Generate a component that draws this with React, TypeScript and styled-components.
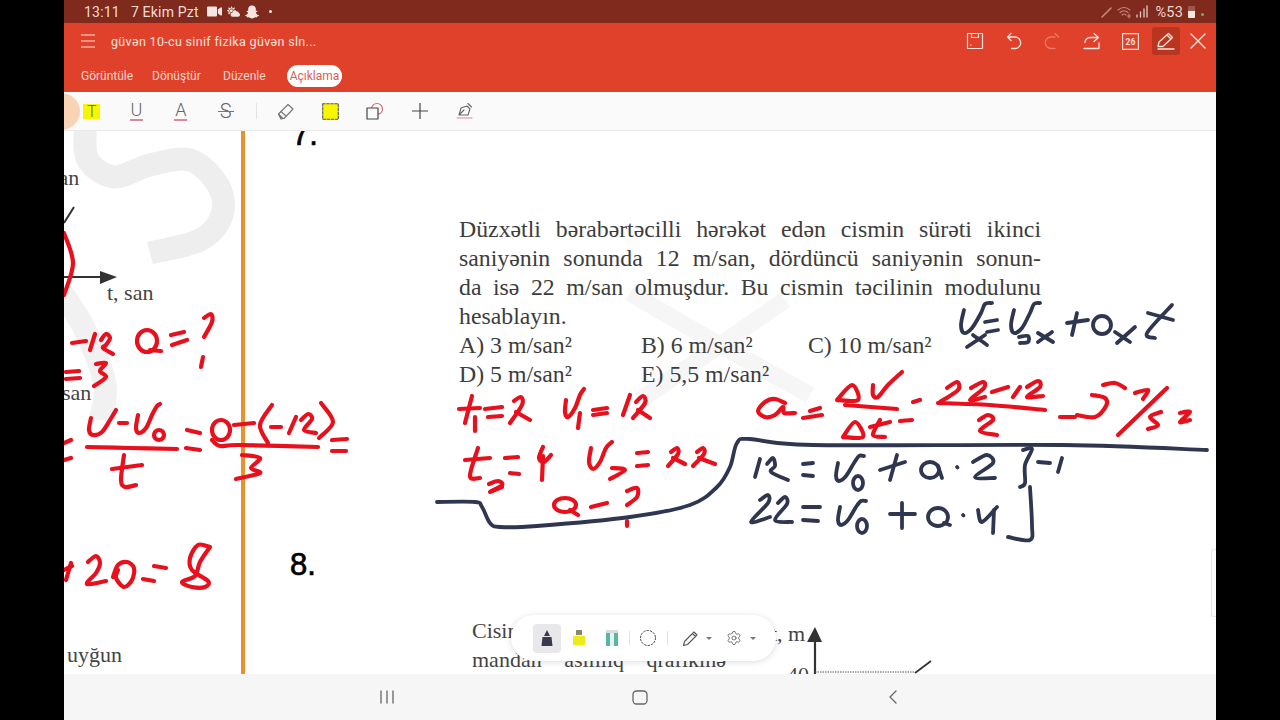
import React from "react";
import styled, { createGlobalStyle } from "styled-components";
import { FaVideo, FaCloudSun, FaSnapchatGhost } from "react-icons/fa";
import { Settings } from "lucide-react";

const Global = createGlobalStyle`
  html, body { margin: 0; padding: 0; background: #000; }
  body { font-family: Roboto, "Noto Sans", sans-serif; }
`;

const Screen = styled.div`
  width: 1280px; height: 720px; padding: 0 64px; box-sizing: border-box;
  background: #000; overflow: hidden;
`;
const Tablet = styled.div`
  width: 1152px; height: 720px; display: flex; flex-direction: column; background: #fff;
`;
const StatusBar = styled.div`
  height: 23px; flex: none; background: #7f2a1c; color: #f3dcd6; display: flex; align-items: center;
  padding: 0 12px 0 20px; font-size: 14px; letter-spacing: .2px;
`;
const StatusTime = styled.span`margin-right: 11px;`;
const StatusDate = styled.span`margin-right: 8px;`;
const StatusIcons = styled.div`display: flex; align-items: center; gap: 5px; color: #f6e6e2;`;
const StatusDot = styled.span`width: 3px; height: 3px; border-radius: 50%; background: #f6e6e2; margin-left: 5px;`;
const StatusRight = styled.div`margin-left: auto; display: flex; align-items: center; gap: 3px; color: #c98a7d;`;
const Percent = styled.span`font-size: 14.5px; line-height: 23px; padding-top: 1px; margin-left: 3px; color: #f0d5cf;`;
const Battery = styled.span`
  width: 7px; height: 12px; margin-left: 2px; border-radius: 1px;
  background: linear-gradient(#9c5a4e 0 45%, #f6e6e2 45%);
`;
const GreenDot = styled.span`width: 3px; height: 3px; border-radius: 50%; background: #57c34e; margin: 6px 0 0 3px;`;

const AppBar = styled.header`
  flex: none; height: 69px; background: #e0412a; color: #fbe3dd; display: flex; flex-direction: column;
`;
const TitleRow = styled.div`height: 36px; display: flex; align-items: center; padding-left: 17px;`;
const Title = styled.span`margin-left: 16px; font-size: 12.5px; letter-spacing: .33px; color: #fbe3dd;`;
const Actions = styled.div`margin-left: auto; display: flex; align-items: center;`;
const Action = styled.button<{ $w: number; $on?: boolean }>`
  width: ${p => p.$w}px; height: 28px; padding: 0; border: 0; border-radius: 3px; display: flex;
  align-items: center; justify-content: center; color: inherit;
  background: ${p => (p.$on ? "#b8361f" : "transparent")};
`;
const TabRow = styled.nav`height: 33px; display: flex; align-items: center; padding-left: 17px; font-size: 12px;`;
const Tab = styled.span<{ $w: number }>`width: ${p => p.$w}px; color: #f8d5cc;`;
const ActiveTab = styled.span`
  background: #fff; color: #d95f54; border-radius: 11px; height: 22px; line-height: 22px; width: 55px;
  text-align: center; font-size: 12px; margin-left: -7px;
`;

const ToolBar = styled.div`
  flex: none; height: 39px; background: #fafafa; border-bottom: 1px solid #e9e9e9; box-sizing: border-box;
  display: flex; align-items: center; padding-left: 5.5px; position: relative; overflow: hidden;
`;
const Blob = styled.span`
  position: absolute; left: -21px; top: 1px; width: 37px; height: 37px; border-radius: 50%; background: #f9d3b6;
`;
const Tool = styled.div`
  width: 44.6px; height: 30px; flex: none; display: flex; align-items: center; justify-content: center; position: relative;
`;
const ToolDivider = styled.span`width: 1px; height: 16px; background: #e3e3e3; margin: 0 7px 0 8px; flex: none;`;
const HighlightT = styled.span`
  width: 17px; height: 15px; background: #f7f500; color: #555; font: 300 16px/15px Roboto, sans-serif; text-align: center;
`;
const GlyphTool = styled.span`
  display: flex; flex-direction: column; align-items: center; color: #666; font: 300 18px/17px Roboto, sans-serif;
`;
const PinkLine = styled.span`display: block; width: 13px; height: 1.5px; background: #d88a9c; margin-top: 1px;`;
const Struck = styled.span`
  color: #666; font: 300 20px/20px Roboto, sans-serif; position: relative; padding: 0 1px;
  &::after { content: ""; position: absolute; left: -1px; right: -1px; top: 10px; height: 1px; background: #777; }
`;

const Canvas = styled.main`flex: 1; position: relative; overflow: hidden; background: #fff;`;
const Drawing = styled.svg`position: absolute; left: 0; top: 0; width: 1152px; height: 543px;`;
const PageText = styled.div<{ $x: number; $y: number; $spread?: number }>`
  position: absolute; left: ${p => p.$x - 64}px; top: ${p => p.$y - 131}px; white-space: nowrap; color: #444;
  font: 22px/24px "Liberation Serif", serif; word-spacing: ${p => p.$spread ?? 0}px;
`;
const Number_ = styled.div<{ $x: number; $y: number }>`
  position: absolute; left: ${p => p.$x - 64}px; top: ${p => p.$y - 131}px; color: #000;
  font: 31px/34px "Liberation Sans", sans-serif; -webkit-text-stroke: .7px #000;
`;
const Question = styled.section`
  position: absolute; left: 395px; top: 83.5px; width: 582px; color: #3d3d3d;
  font: 23.8px/29px "Liberation Serif", serif;
`;
const Justified = styled.div`text-align: justify; text-align-last: justify; white-space: nowrap;`;
const Options = styled.div`display: grid; grid-template-columns: 182px 167px 1fr; white-space: nowrap;`;
const Orange = styled.span`position: absolute; left: 177px; top: 0; bottom: 0; width: 4px; background: #e8922e;`;
const Scroll = styled.span`
  position: absolute; right: 0; top: 418px; width: 4px; height: 66px; border: 1px solid #e6e6e6; border-right: 0; border-radius: 3px 0 0 3px;
`;

const Pill = styled.div`
  position: absolute; left: 447px; top: 484px; width: 265px; height: 46px; border-radius: 23px; background: #fff;
  box-shadow: 0 1px 6px rgba(0,0,0,.14); display: flex; align-items: center; padding-left: 22px; box-sizing: border-box;
`;
const PillTool = styled.div<{ $on?: boolean; $w: number; $gap?: number }>`
  width: ${p => p.$w}px; height: 29px; flex: none; border-radius: 4px; display: flex; align-items: center; justify-content: center;
  gap: ${p => p.$gap ?? 0}px; color: #555; background: ${p => (p.$on ? "#e8e8ea" : "transparent")};
`;
const PillDivider = styled.span`width: 1px; height: 14px; background: #e4e4e4; flex: none; margin-left: 1px;`;
const Caret = styled.span`width: 0; height: 0; border: 3px solid transparent; border-top: 3px solid #777; border-bottom: 0;`;

const NavBar = styled.footer`
  flex: none; height: 46px; background: #f6f6f6; display: grid; grid-template-columns: repeat(3, 253px);
  justify-content: center; align-items: center; justify-items: center; color: #666;
`;

/* Freehand ink: smooth curve through points given in screen coordinates */
const s = (...p: number[]) => {
  let d = `M${p[0]},${p[1]}`;
  const n = p.length / 2;
  const at = (i: number) => { const k = Math.max(0, Math.min(n - 1, i)); return [p[k * 2], p[k * 2 + 1]]; };
  for (let i = 0; i < n - 1; i++) {
    const [a, b] = at(i - 1), [c, e] = at(i), [f, g] = at(i + 1), [h, j] = at(i + 2);
    d += `C${(c + (f - a) / 6).toFixed(1)},${(e + (g - b) / 6).toFixed(1)} ${(f - (h - c) / 6).toFixed(1)},${(g - (j - e) / 6).toFixed(1)} ${f},${g}`;
  }
  return d;
};
const o = (x: number, y: number, rx: number, ry: number) =>
  `M${x - rx},${y}a${rx},${ry} 0 1,0 ${rx * 2},0a${rx},${ry} 0 1,0 ${-rx * 2},0`;

const WATERMARK = [
  s(150, 253, 200, 240, 222, 215, 218, 185, 190, 160, 150, 165, 114, 177, 88, 160, 85, 130),
  s(60, 290, 85, 330, 105, 385, 100, 420),
  s(630, 293, 720, 345, 810, 395),
  s(785, 300, 720, 345, 640, 400),
];

const RED = [
  s(64, 233, 73, 263, 64, 295),
  s(72, 343, 86, 341), s(95, 334, 90, 350), s(101, 340, 106, 334, 110, 338, 106, 345, 103, 348, 113, 354),
  o(147, 341, 10, 11), s(150, 350, 161, 351),
  s(171, 335, 184, 332), s(172, 345, 187, 340),
  s(204, 318, 211, 314, 212, 322, 204, 337), s(203, 357, 201, 367),
  s(66, 372, 79, 371), s(66, 379, 80, 378), s(96, 364, 106, 363, 100, 371, 106, 377, 94, 386),
  s(64, 443, 71, 440), s(64, 460, 71, 458),
  s(91, 418, 89, 430, 93, 435, 102, 432, 110, 420, 116, 410), s(119, 423, 127, 423),
  s(138, 415, 136, 428, 139, 433, 146, 428, 152, 415, 157, 406, 160, 404), o(159, 435, 5, 5),
  s(87, 447, 130, 448, 177, 449),
  s(112, 469, 142, 465), s(124, 455, 121, 480, 125, 487, 136, 485),
  s(187, 430, 200, 433), s(186, 448, 200, 450),
  o(221, 430, 9, 10), s(234, 425, 254, 423),
  s(272, 405, 260, 425, 268, 443), s(271, 427, 281, 427), s(296, 417, 289, 433),
  s(301, 420, 308, 414, 312, 419, 304, 430, 316, 433),
  s(321, 403, 333, 422, 319, 438),
  s(212, 440, 220, 446, 240, 445, 318, 447),
  s(242, 455, 260, 458, 251, 468, 260, 473, 236, 479),
  s(332, 440, 347, 439), s(332, 451, 346, 451),
  s(64, 570, 72, 566), s(71, 563, 66, 580),
  s(88, 562, 96, 556, 100, 563, 96, 573, 87, 584, 106, 581),
  s(113, 577, 118, 565, 127, 562, 134, 568, 132, 580, 124, 587, 116, 578, 118, 570),
  s(143, 579, 154, 581), s(154, 566, 166, 568),
  s(210, 547, 198, 545, 190, 558, 192, 570, 208, 581, 205, 587, 192, 587, 182, 582, 195, 576, 200, 562, 210, 547),
  s(459, 409, 480, 408), s(472, 396, 465, 423), s(475, 417, 475, 431),
  s(485, 409, 502, 407), s(488, 417, 502, 416),
  s(514, 401, 521, 397, 522, 405, 510, 423), s(516, 412, 530, 420),
  s(566, 400, 565, 412, 568, 417, 575, 408, 580, 395, 584, 389), s(580, 413, 578, 428),
  s(593, 410, 607, 408), s(593, 415, 607, 413),
  s(630, 395, 623, 415), s(636, 402, 643, 396, 645, 403, 633, 418), s(638, 410, 650, 418),
  s(465, 460, 490, 458), s(478, 448, 470, 476, 480, 478),
  s(489, 484, 498, 481, 502, 485, 490, 492), s(492, 491, 502, 487),
  s(505, 458, 518, 457), s(510, 473, 519, 474),
  s(543, 447, 539, 458, 544, 462, 551, 455), s(543, 456, 542, 480),
  s(591, 448, 589, 462, 593, 469, 600, 462, 606, 448, 612, 442), s(612, 468, 625, 470, 610, 479),
  s(637, 453, 648, 452), s(637, 466, 648, 465),
  s(671, 452, 677, 448, 678, 454, 668, 466), s(673, 458, 685, 464),
  s(697, 452, 703, 448, 704, 454, 693, 466), s(699, 458, 715, 464),
  o(565, 505, 11, 7), s(570, 510, 578, 515),
  s(591, 507, 607, 503), s(627, 491, 637, 488, 637, 497, 627, 505), s(627, 521, 627, 526),
  s(785, 403, 775, 399, 765, 402, 758, 411, 765, 417, 775, 415, 783, 407, 784, 413, 795, 413),
  s(803, 418, 822, 415), s(810, 411, 820, 408),
  s(837, 400, 852, 385, 858, 400, 837, 400), s(873, 385, 873, 395, 878, 397, 888, 385, 902, 372),
  s(845, 405, 897, 409),
  s(843, 437, 855, 422, 863, 437, 843, 437), s(870, 427, 890, 422), s(880, 420, 873, 435, 885, 437),
  s(900, 421, 912, 420), s(913, 402, 920, 400),
  s(947, 388, 957, 382, 958, 390, 940, 402), s(938, 403, 990, 405, 1045, 410),
  s(971, 388, 983, 382, 984, 388, 970, 400, 985, 397),
  s(992, 392, 1008, 387), s(1020, 387, 1013, 397),
  s(1027, 387, 1038, 381, 1040, 387, 1027, 397, 1043, 396),
  s(979, 420, 988, 415, 993, 420, 980, 431, 997, 435),
  s(1060, 417, 1075, 417), s(1077, 415, 1095, 417, 1106, 406, 1105, 398, 1092, 395),
  s(1103, 385, 1115, 383, 1125, 388),
  s(1118, 435, 1167, 388),
  s(1135, 393, 1148, 390, 1143, 399),
  s(1148, 429, 1158, 425, 1150, 417, 1161, 412),
  s(1180, 413, 1190, 412, 1180, 422, 1190, 420),
];

const NAVY = [
  s(437, 502, 475, 502, 482, 507, 490, 523, 500, 527, 537, 526, 630, 517, 690, 505, 717, 487, 730, 467, 737, 443, 750, 439, 813, 445, 1063, 445, 1207, 450),
  s(964, 310, 961, 325, 964, 333, 972, 328, 981, 313, 985, 304, 992, 303), s(967, 347, 985, 335), s(973, 335, 987, 345),
  s(985, 322, 997, 320), s(987, 332, 998, 330),
  s(1014, 310, 1011, 325, 1014, 333, 1022, 328, 1030, 313, 1034, 304, 1040, 303), s(1019, 337, 1028, 336, 1028, 342, 1020, 343),
  s(1038, 333, 1053, 342), s(1052, 332, 1038, 342),
  s(1067, 323, 1088, 320), s(1077, 313, 1072, 335),
  o(1102, 325, 9, 9), s(1115, 332, 1130, 342), s(1135, 327, 1117, 343),
  s(1148, 313, 1173, 320), s(1172, 305, 1147, 333, 1155, 338),
  s(760, 459, 755, 477), s(767, 464, 773, 458, 775, 466, 771, 472, 788, 480),
  s(803, 464, 813, 463), s(803, 475, 813, 476),
  s(838, 463, 836, 476, 839, 481, 846, 476, 854, 463, 859, 456, 864, 456), o(858, 483, 5, 7),
  s(880, 470, 905, 462), s(897, 455, 890, 480),
  o(930, 470, 9, 8), s(938, 466, 942, 478),
  s(957, 467, 957.5, 467.5),
  s(973, 462, 987, 455, 993, 463, 975, 477, 995, 478),
  s(1023, 450, 1032, 449, 1025, 465, 1025, 483, 1020, 487),
  s(1030, 487, 1032, 525, 1030, 540, 1008, 537),
  s(1038, 462, 1050, 463), s(1062, 458, 1058, 472),
  s(760, 500, 768, 495, 768, 503, 751, 522, 770, 517), s(778, 503, 785, 497, 787, 504, 775, 520, 792, 522),
  s(803, 507, 820, 507), s(803, 520, 818, 521),
  s(840, 507, 838, 520, 841, 525, 848, 520, 856, 507, 861, 501, 866, 501), o(862, 526, 5, 7),
  s(890, 514, 915, 514), s(902, 503, 902, 528),
  o(938, 517, 10, 9), s(944, 523, 950, 525),
  s(963, 515, 963.5, 515.5),
  s(978, 510, 982, 522, 997, 507), s(994, 510, 993, 533),
];

const Ico = styled.svg.attrs<{ stroke?: string }>(p => ({
  fill: "none",
  stroke: p.stroke ?? "currentColor",
  strokeLinecap: "round",
  strokeLinejoin: "round",
}))``;

const App = () => (
  <Screen>
    <Global />
    <Tablet>
      <StatusBar>
        <StatusTime>13:11</StatusTime>
        <StatusDate>7 Ekim Pzt</StatusDate>
        <StatusIcons>
          <FaVideo size={15} /><FaCloudSun size={13} /><FaSnapchatGhost size={14} /><StatusDot />
        </StatusIcons>
        <StatusRight>
          <Ico width="14" height="14" viewBox="0 0 14 14" strokeWidth="1.6"><path d="M2 12 L11 3" /></Ico>
          <Ico width="15" height="14" viewBox="0 0 15 14" strokeWidth="1.1">
            <path d="M1 5 Q7 0 13 5M3 7.5 Q7 4 11 7.5M5 10 Q7 8 9 10" /><path d="M12 9v4M10.5 11h3" />
          </Ico>
          <Ico width="14" height="14" viewBox="0 0 14 14" strokeWidth="1.3" stroke="#e9c9c2"><path d="M2 12v-2M5.5 12V7M9 12V4M12 12V1" /></Ico>
          <Percent>%53</Percent>
          <Battery /><GreenDot />
        </StatusRight>
      </StatusBar>

      <AppBar>
        <TitleRow>
          <Ico width="14" height="16" viewBox="0 0 14 16" strokeWidth="1.2" aria-label="Menü"><path d="M0 2h14M0 8h14M0 14h14" /></Ico>
          <Title>güvən 10-cu sinif fizika güvən sln...</Title>
          <Actions>
            <Action $w={46}>
              <Ico width="18" height="18" viewBox="0 0 18 18" strokeWidth="1.2"><path d="M2 1.500h14a.5.5 0 0 1 .5.5v14a.5.5 0 0 1-.5.5H2a.5.5 0 0 1-.5-.5V2a.5.5 0 0 1 .5-.5zM5.500 1.500v4h7v-4M4.500 13h.5" /></Ico>
            </Action>
            <Action $w={32}>
              <Ico width="18" height="18" viewBox="0 0 18 18" strokeWidth="1.3"><path d="M6 1.500 2.500 5 6 8.500M2.500 5H10a5 5 0 0 1 0 11.500H6.500" /></Ico>
            </Action>
            <Action $w={44}>
              <Ico width="18" height="18" viewBox="0 0 18 18" strokeWidth="1.3" opacity=".35"><path d="M12 5H8a5.500 5.500 0 0 0 0 11.500h4" /><path d="M12 1.500 15.500 5" /></Ico>
            </Action>
            <Action $w={34}>
              <Ico width="19" height="18" viewBox="0 0 19 18" strokeWidth="1.3"><path d="M12 1.500 16.500 5.500 12 9.500M16.500 5.500H8A5 5 0 0 0 3 10.500M2 16.500h15V11" /></Ico>
            </Action>
            <Action $w={44}>
              <Ico width="17" height="17" viewBox="0 0 17 17" strokeWidth="1.1">
                <rect x=".6" y=".6" width="15.800" height="15.800" />
                <text x="8.500" y="12" fontSize="8.500" fontWeight="700" textAnchor="middle" fill="currentColor" stroke="none" fontFamily="Roboto, sans-serif">26</text>
              </Ico>
            </Action>
            <Action $w={28} $on>
              <Ico width="20" height="20" viewBox="0 0 20 20" strokeWidth="1.3"><path d="M2 15.500 3 11 12.500 2.500 16.500 6.500 7 15.500zM11 4l4 4M2 18h16" /></Ico>
            </Action>
            <Action $w={36}>
              <Ico width="16" height="16" viewBox="0 0 16 16" strokeWidth="1.4"><path d="M1 1l14 14M15 1 1 15" /></Ico>
            </Action>
          </Actions>
        </TitleRow>
        <TabRow>
          <Tab $w={71}>Görüntüle</Tab>
          <Tab $w={71}>Dönüştür</Tab>
          <Tab $w={71}>Düzenle</Tab>
          <ActiveTab>Açıklama</ActiveTab>
        </TabRow>
      </AppBar>

      <ToolBar>
        <Blob />
        <Tool><HighlightT>T</HighlightT></Tool>
        <Tool><GlyphTool>U<PinkLine /></GlyphTool></Tool>
        <Tool><GlyphTool>A<PinkLine /></GlyphTool></Tool>
        <Tool><Struck>S</Struck></Tool>
        <ToolDivider />
        <Tool>
          <Ico width="18" height="18" viewBox="0 0 18 18" stroke="#777" strokeWidth="1.1">
            <path d="M1.500 12 11 2.500l5 4.500-9 9.500H4z" /><path d="M1.500 12l4.500 4.500-1.500.5H4z" fill="#c9c9c9" /><path d="M4 9.500 9 14" />
          </Ico>
        </Tool>
        <Tool>
          <Ico width="17" height="17" viewBox="0 0 17 17" stroke="#555" strokeWidth="1.100" strokeDasharray="2.500 1.500"><rect x=".7" y=".7" width="15.600" height="15.600" fill="#f7f500" /></Ico>
        </Tool>
        <Tool>
          <Ico width="18" height="18" viewBox="0 0 18 18" strokeWidth="1.200">
            <circle cx="11" cy="7" r="5.500" stroke="#cf6f70" /><rect x="1" y="6" width="11" height="11" fill="#fafafa" stroke="#444" />
          </Ico>
        </Tool>
        <Tool>
          <Ico width="16" height="16" viewBox="0 0 16 16" stroke="#444" strokeWidth="1.200"><path d="M8 0v16M0 8h16" /></Ico>
        </Tool>
        <Tool>
          <Ico width="18" height="18" viewBox="0 0 18 18" stroke="#666" strokeWidth="1.100">
            <path d="M3 13 5 6l6-2 3 3-2 6zM3 13l5-5M12 1.500 15.500 5" /><path d="M1 16h15" stroke="#d88a9c" />
          </Ico>
        </Tool>
      </ToolBar>

      <Canvas>
        <Drawing viewBox="64 131 1152 543">
          <g fill="none" strokeLinejoin="round">
            {WATERMARK.map((d, i) => <path key={i} d={d} strokeWidth={i < 2 ? 23 : 17} stroke={i === 0 ? "#eeeeee" : i === 1 ? "#f1f1f1" : "#f6f6f6"} />)}
          </g>
          <path d="M64 277H102M64 223 74 207" stroke="#333" strokeWidth="2" fill="none" />
          <path d="M100 271 117 277 100 284z" fill="#333" />
          <path d="M815 674V640" stroke="#333" strokeWidth="2.200" />
          <path d="M807 642 815 627 822 642z" fill="#333" />
          <path d="M815 672H915" stroke="#555" strokeWidth="1" strokeDasharray="1.500 1" />
          <path d="M915 673 931 661" stroke="#333" strokeWidth="1.800" />
        </Drawing>
        <Orange />
        <Number_ $x={292} $y={118}>7.</Number_>
        <Number_ $x={290} $y={548}>8.</Number_>
        <PageText $x={50} $y={166}>san</PageText>
        <PageText $x={107} $y={281}>t, san</PageText>
        <PageText $x={62} $y={381}>san</PageText>
        <PageText $x={67} $y={643}>uyğun</PageText>
        <PageText $x={472} $y={619}>Cisim</PageText>
        <PageText $x={472} $y={648} $spread={17}>mandan asılılıq qrafikinə</PageText>
        <PageText $x={771} $y={622}>t, m</PageText>
        <PageText $x={787} $y={663}>40</PageText>
        <Question>
          <Justified>Düzxətli bərabərtəcilli hərəkət edən cismin sürəti ikinci</Justified>
          <Justified>saniyənin sonunda 12 m/san, dördüncü saniyənin sonun-</Justified>
          <Justified>da isə 22 m/san olmuşdur. Bu cismin təcilinin modulunu</Justified>
          <div>hesablayın.</div>
          <Options>
            <span>A) 3 m/san²</span><span>B) 6 m/san²</span><span>C) 10 m/san²</span>
            <span>D) 5 m/san²</span><span>E) 5,5 m/san²</span>
          </Options>
        </Question>
        <Drawing viewBox="64 131 1152 543">
          <g fill="none" strokeLinecap="round" strokeLinejoin="round">
            <g stroke="#e8101c" strokeWidth="4.200">{RED.map((d, i) => <path key={i} d={d} />)}</g>
            <g stroke="#2f3650" strokeWidth="3.800">{NAVY.map((d, i) => <path key={i} d={d} />)}</g>
          </g>
        </Drawing>
        <Scroll />
        <Pill>
          <PillTool $on $w={28}>
            <Ico width="12" height="18" viewBox="0 0 12 18" stroke="none"><path d="M6 1 9 7H3zM1.500 8h9l1 9H.5z" fill="#3a3a4e" /></Ico>
          </PillTool>
          <PillTool $w={35}>
            <Ico width="14" height="18" viewBox="0 0 14 18" stroke="none"><path d="M4 1h6v5H4z" fill="#8a8a6a" /><path d="M1 7h12v9H1z" fill="#ecec1c" /></Ico>
          </PillTool>
          <PillTool $w={32}>
            <Ico width="14" height="18" viewBox="0 0 14 18" stroke="none"><path d="M1 1h12v3H1z" fill="#d5dedb" /><path d="M1 4h4v13H1zM9 4h4v13H9z" fill="#58b7a4" /><path d="M5 4h4v13H5z" fill="#e4f1ee" /></Ico>
          </PillTool>
          <PillDivider />
          <PillTool $w={36}>
            <Ico width="18" height="18" viewBox="0 0 18 18" stroke="#444" strokeWidth="1" strokeDasharray="1.600 1.800"><circle cx="9" cy="9" r="7.500" /></Ico>
          </PillTool>
          <PillDivider />
          <PillTool $w={58} $gap={7}>
            <Ico width="17" height="17" viewBox="0 0 17 17" stroke="#555" strokeWidth="1.100"><path d="M1.500 15.500 2.500 11.500 12 2l3 3-9.500 9.500zM10.500 3.500l3 3" /></Ico>
            <Caret />
          </PillTool>
          <PillTool $w={30} $gap={8}>
            <Settings size={16} strokeWidth={1.2} color="#555" />
            <Caret />
          </PillTool>
        </Pill>
      </Canvas>

      <NavBar>
        <Ico width="16" height="14" viewBox="0 0 16 14" strokeWidth="1.300"><path d="M2 1v12M8 1v12M14 1v12" /></Ico>
        <Ico width="16" height="15" viewBox="0 0 16 15" strokeWidth="1.300"><rect x="1" y="1" width="14" height="13" rx="3.500" /></Ico>
        <Ico width="10" height="16" viewBox="0 0 10 16" strokeWidth="1.300"><path d="M8 2 2 8l6 6" /></Ico>
      </NavBar>
    </Tablet>
  </Screen>
);

export default App;
